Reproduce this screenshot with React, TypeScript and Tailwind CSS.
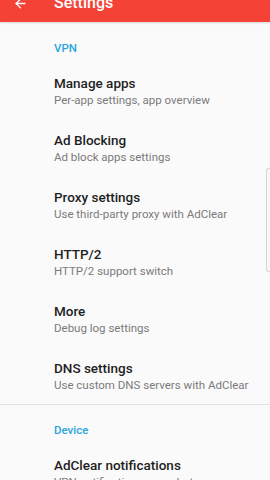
import { ArrowLeft } from 'lucide-react'

type Item = { title: string; summary: string }

const VPN_ITEMS: Item[] = [
  { title: 'Manage apps', summary: 'Per-app settings, app overview' },
  { title: 'Ad Blocking', summary: 'Ad block apps settings' },
  { title: 'Proxy settings', summary: 'Use third-party proxy with AdClear' },
  { title: 'HTTP/2', summary: 'HTTP/2 support switch' },
  { title: 'More', summary: 'Debug log settings' },
  { title: 'DNS settings', summary: 'Use custom DNS servers with AdClear' },
]

const DEVICE_ITEMS: Item[] = [
  { title: 'AdClear notifications', summary: 'VPN notifications, app alerts' },
]

function SectionHeader({ label }: { label: string }) {
  return (
    <div className="pl-[54px] pt-[18px] pb-[6px] text-[11.5px] leading-[16px] font-medium text-[#2aa5dc]">
      {label}
    </div>
  )
}

function Pref({ item }: { item: Item }) {
  return (
    <div className="pl-[54px] pr-3 pt-[12px] pb-[11px]">
      <div className="text-[13.5px] leading-[18px] font-medium text-[#1f1f1f]">{item.title}</div>
      <div className="text-[11.5px] leading-[16px] text-[#7a7a7a]">{item.summary}</div>
    </div>
  )
}

export default function App() {
  return (
    <div
      className="relative w-[270px] h-[480px] overflow-hidden bg-[#fafafa]"
      style={{ fontFamily: 'Roboto, "Noto Sans", sans-serif' }}
    >
      <div className="h-[22px] bg-[#f44336] overflow-hidden flex items-start shadow-[0_1px_2px_rgba(0,0,0,0.15)]">
        <div className="flex items-center h-[12px] -mt-[3px]">
          <ArrowLeft className="ml-[13px] w-[15px] h-[15px] text-white" strokeWidth={2.2} />
          <span className="ml-[26px] text-[16px] font-medium text-white leading-none">Settings</span>
        </div>
      </div>

      <SectionHeader label="VPN" />
      {VPN_ITEMS.map((it) => (
        <Pref key={it.title} item={it} />
      ))}

      <div className="h-px bg-[#e2e2e2]" />

      <div className="-mt-px">
        <SectionHeader label="Device" />
        {DEVICE_ITEMS.map((it) => (
          <Pref key={it.title} item={it} />
        ))}
      </div>

      <div className="absolute right-0 top-[168px] w-[4px] h-[104px] border border-r-0 border-[#d4d4d4] rounded-l-[3px] bg-[#fafafa]" />
    </div>
  )
}
